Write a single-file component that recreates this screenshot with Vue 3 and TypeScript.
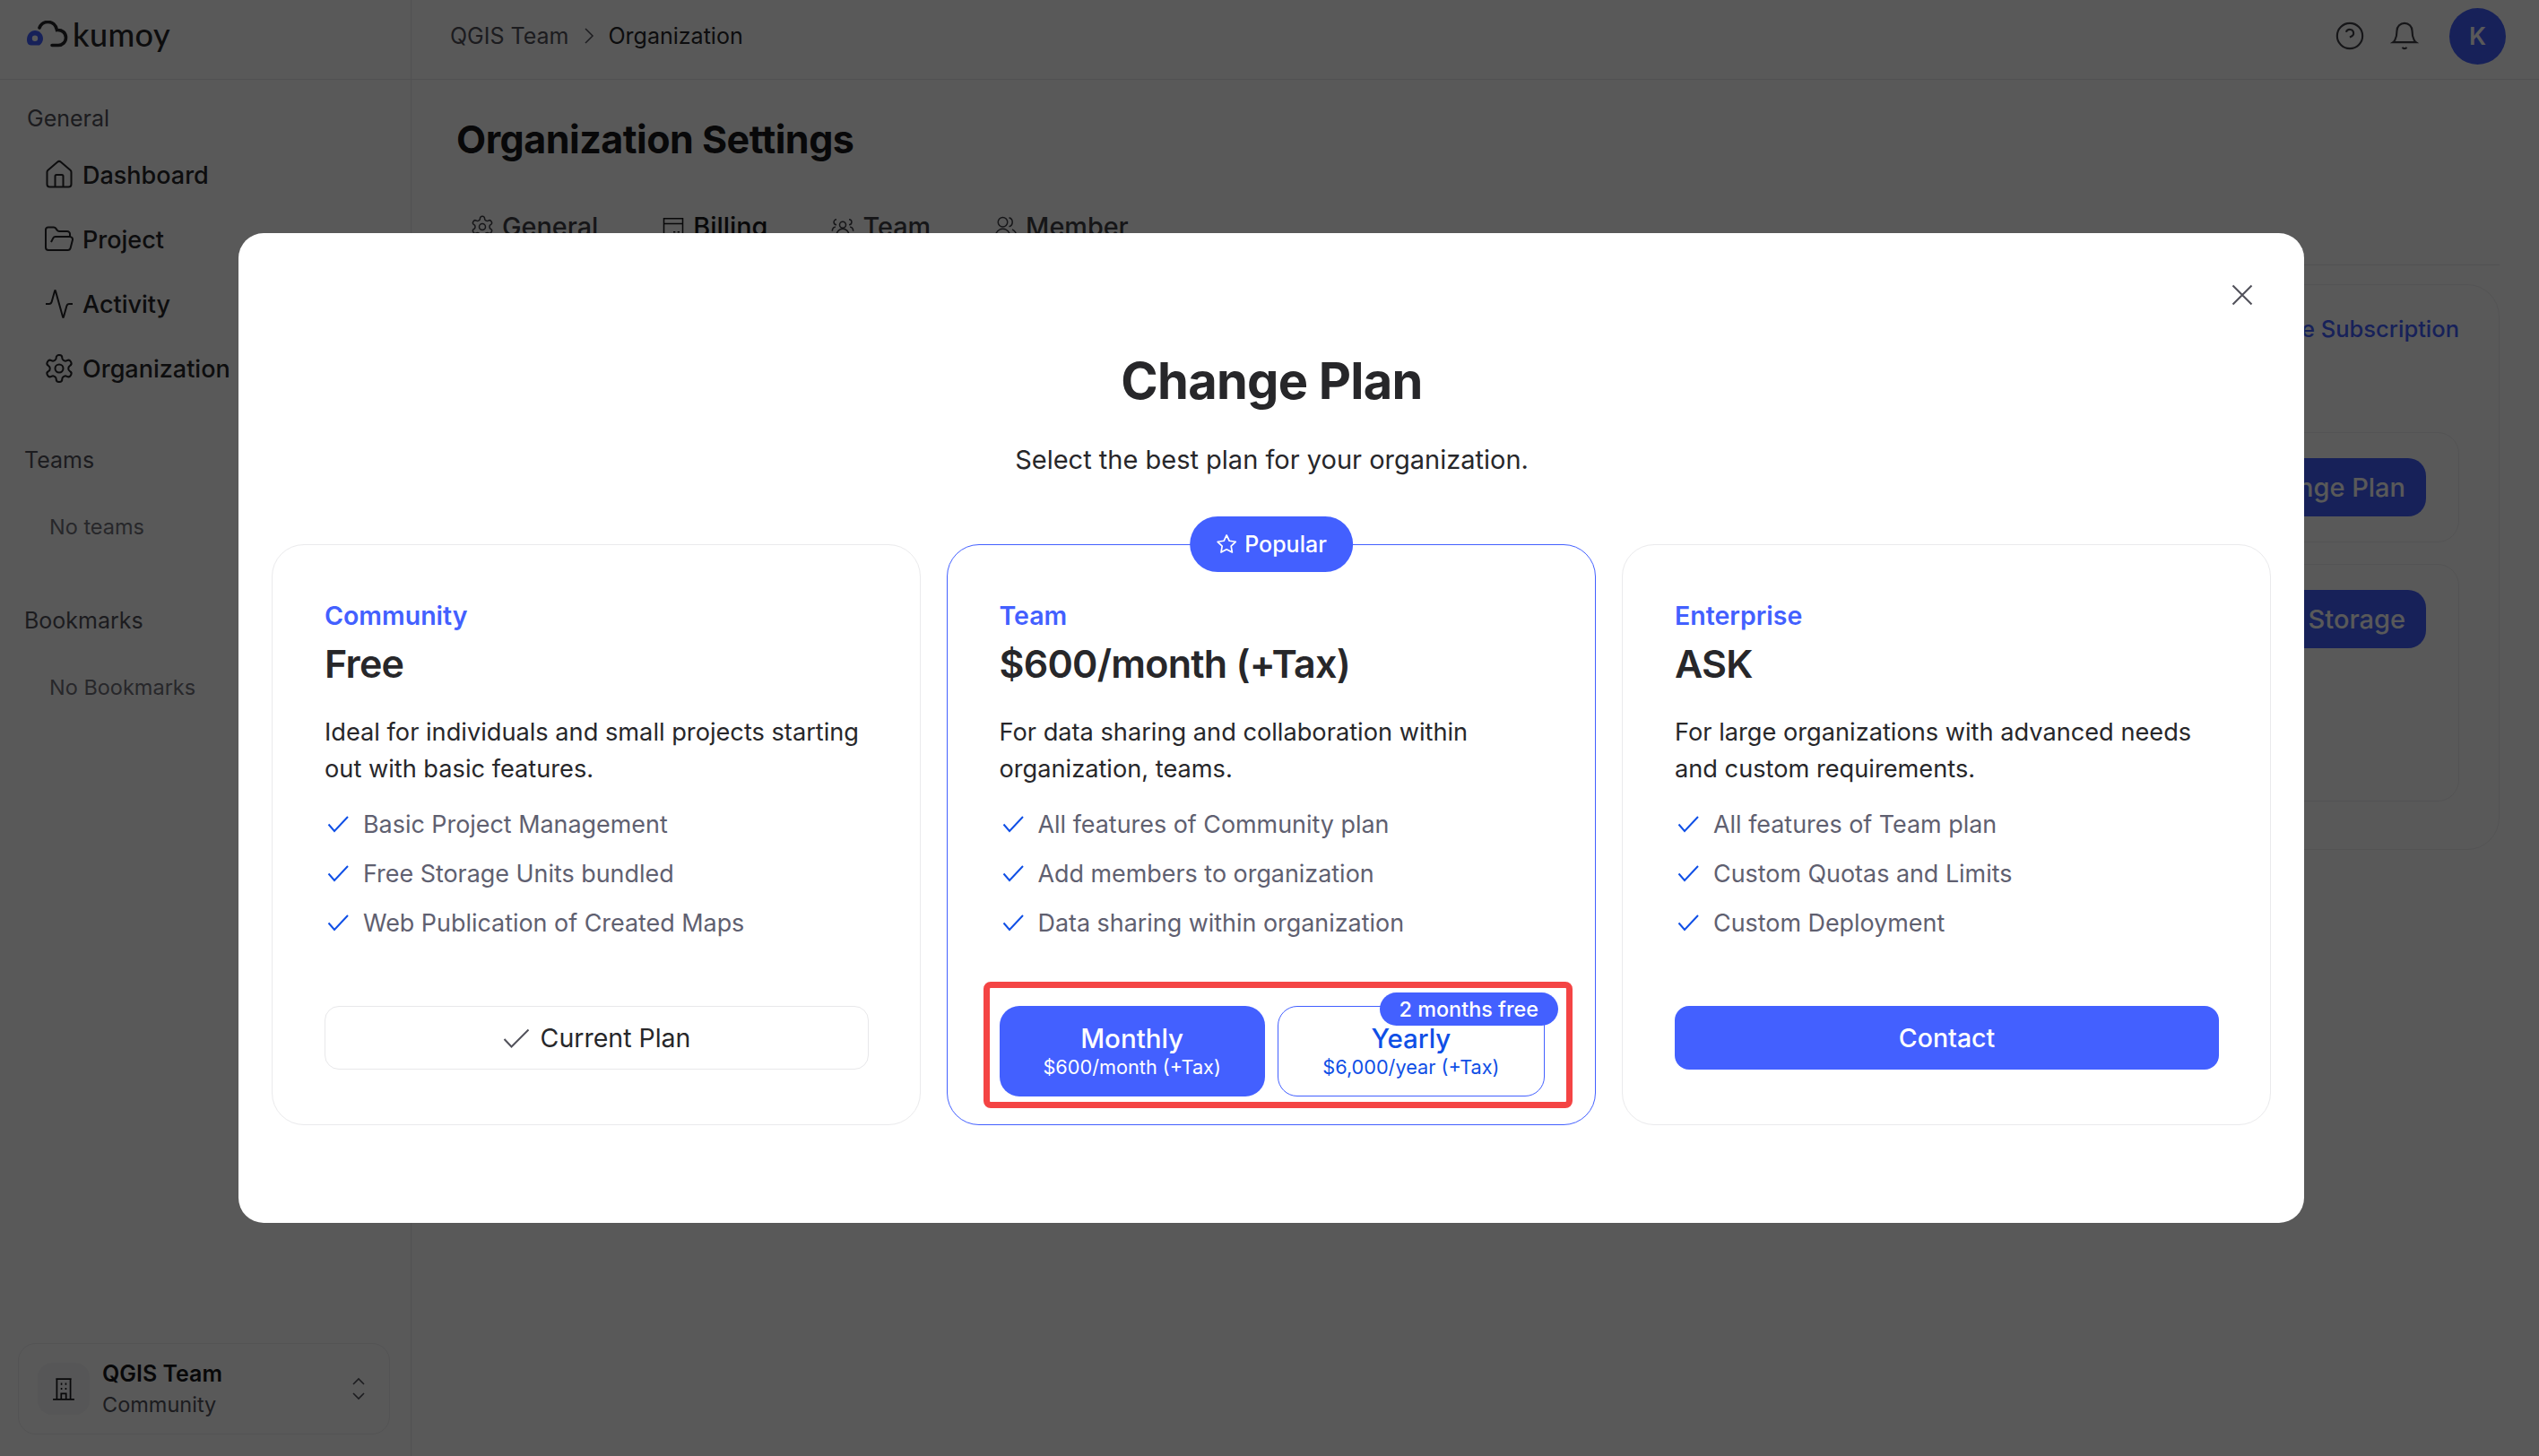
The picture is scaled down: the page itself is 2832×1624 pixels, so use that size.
<script setup lang="ts">
type Plan = {
  id: string
  label: string
  price: string
  desc: string
  features: string[]
}

const navItems = [
  { label: 'Dashboard', icon: 'home' },
  { label: 'Project', icon: 'folder' },
  { label: 'Activity', icon: 'activity' },
  { label: 'Organization', icon: 'gear' },
]

const tabs = [
  { label: 'General', icon: 'gear' },
  { label: 'Billing', icon: 'billing' },
  { label: 'Team', icon: 'team' },
  { label: 'Member', icon: 'member' },
]

const icons: Record<string, string[]> = {
  home: [
    'M15 21v-8a1 1 0 0 0-1-1h-4a1 1 0 0 0-1 1v8',
    'M3 10a2 2 0 0 1 .709-1.528l7-5.999a2 2 0 0 1 2.582 0l7 5.999A2 2 0 0 1 21 10v9a2 2 0 0 1-2 2H5a2 2 0 0 1-2-2z',
  ],
  folder: [
    'm6 14 1.5-2.9A2 2 0 0 1 9.24 10H20a2 2 0 0 1 1.94 2.5l-1.54 6a2 2 0 0 1-1.94 1.5H4a2 2 0 0 1-2-2V5a2 2 0 0 1 2-2h3.9a2 2 0 0 1 1.69.9l.81 1.2a2 2 0 0 0 1.67.9H18a2 2 0 0 1 2 2v2',
  ],
  activity: [
    'M22 12h-2.48a2 2 0 0 0-1.93 1.46l-2.35 8.36a.25.25 0 0 1-.48 0L9.24 2.18a.25.25 0 0 0-.48 0l-2.35 8.36A2 2 0 0 1 4.49 12H2',
  ],
  gear: [
    'M12.22 2h-.44a2 2 0 0 0-2 2v.18a2 2 0 0 1-1 1.73l-.43.25a2 2 0 0 1-2 0l-.15-.08a2 2 0 0 0-2.73.73l-.22.38a2 2 0 0 0 .73 2.73l.15.1a2 2 0 0 1 1 1.72v.51a2 2 0 0 1-1 1.74l-.15.09a2 2 0 0 0-.73 2.73l.22.38a2 2 0 0 0 2.73.73l.15-.08a2 2 0 0 1 2 0l.43.25a2 2 0 0 1 1 1.73V20a2 2 0 0 0 2 2h.44a2 2 0 0 0 2-2v-.18a2 2 0 0 1 1-1.73l.43-.25a2 2 0 0 1 2 0l.15.08a2 2 0 0 0 2.73-.73l.22-.39a2 2 0 0 0-.73-2.73l-.15-.08a2 2 0 0 1-1-1.74v-.5a2 2 0 0 1 1-1.74l.15-.09a2 2 0 0 0 .73-2.73l-.22-.38a2 2 0 0 0-2.73-.73l-.15.08a2 2 0 0 1-2 0l-.43-.25a2 2 0 0 1-1-1.73V4a2 2 0 0 0-2-2z',
    'M15 12a3 3 0 1 1-6 0 3 3 0 0 1 6 0z',
  ],
  billing: ['M3 4h18v17H3z', 'M3 9h18', 'M12 17h2M16 17h2'],
  team: ['M12 13a3 3 0 1 0 0-6 3 3 0 0 0 0 6z', 'M6 20a6 6 0 0 1 12 0', 'M6 5a2.5 2.5 0 0 0 0 5M2 16a4 4 0 0 1 3-4', 'M18 5a2.5 2.5 0 0 1 0 5M22 16a4 4 0 0 0-3-4'],
  member: ['M9 12a4.5 4.5 0 1 0 0-9 4.5 4.5 0 0 0 0 9z', 'M2 21a7 7 0 0 1 14 0', 'M15 3.2a4.5 4.5 0 0 1 0 8.6M18 14.5a7 7 0 0 1 4 6.5'],
}

const plans: Plan[] = [
  {
    id: 'community',
    label: 'Community',
    price: 'Free',
    desc: 'Ideal for individuals and small projects starting out with basic features.',
    features: ['Basic Project Management', 'Free Storage Units bundled', 'Web Publication of Created Maps'],
  },
  {
    id: 'team',
    label: 'Team',
    price: '$600/month (+Tax)',
    desc: 'For data sharing and collaboration within organization, teams.',
    features: ['All features of Community plan', 'Add members to organization', 'Data sharing within organization'],
  },
  {
    id: 'enterprise',
    label: 'Enterprise',
    price: 'ASK',
    desc: 'For large organizations with advanced needs and custom requirements.',
    features: ['All features of Team plan', 'Custom Quotas and Limits', 'Custom Deployment'],
  },
]
</script>

<template>
  <div class="page">
    <aside class="sidebar">
      <div class="logo">
        <svg class="logo-mark" width="46" height="30" viewBox="0 0 46 30" fill="none">
          <path d="M14 27.5 H4.5 C1.5 27.5 0 24.5 0 21.5 C0 15.5 4 11 9 11 C14 11 18 15 18 20 C18 23 16.5 25.5 14 27.5 Z M9 23 a3.2 3.2 0 1 0 0-6.4 a3.2 3.2 0 0 0 0 6.4 Z" fill="#4360ff" fill-rule="evenodd" />
          <path d="M14 8 C16 3 20 1.5 23.5 1.5 C28.5 1.5 32.5 5 33.5 10.5 C39 10 43.5 13.5 43.5 19 C43.5 24 39.5 27.5 35 27.5 H28" stroke="#27272a" stroke-width="3.6" stroke-linecap="round" />
        </svg>
        <span class="logo-text">kumoy</span>
      </div>

      <div class="side-title general">General</div>
      <nav class="nav">
        <a v-for="item in navItems" :key="item.label" class="nav-item">
          <svg width="36" height="36" viewBox="0 0 24 24" fill="none" stroke="currentColor" stroke-width="1.35">
            <path v-for="d in icons[item.icon]" :key="d" :d="d" />
          </svg>
          {{ item.label }}
        </a>
      </nav>

      <div class="side-title">Teams</div>
      <div class="side-empty">No teams</div>
      <div class="side-title">Bookmarks</div>
      <div class="side-empty">No Bookmarks</div>

      <div class="org-switch">
        <div class="org-icon">
          <svg width="26" height="26" viewBox="0 0 24 24" fill="none" stroke="#18181b" stroke-width="1.6">
            <path d="M1 23h22M4 2h16M5 2v21M19 2v21M9.5 23v-6h5v6" />
            <path d="M9 7h1.5M13.5 7H15M9 12h1.5M13.5 12H15" stroke-width="2" />
          </svg>
        </div>
        <div class="org-text">
          <div class="org-name">QGIS Team</div>
          <div class="org-plan">Community</div>
        </div>
        <svg width="16" height="28" viewBox="0 0 16 28" fill="none" stroke="#52525b" stroke-width="1.6">
          <path d="M2 9l6-6 6 6M2 19l6 6 6-6" />
        </svg>
      </div>
    </aside>

    <main class="main">
      <header class="topbar">
        <span class="crumb">QGIS Team</span>
        <svg width="14" height="24" viewBox="0 0 14 24" fill="none" stroke="#52525b" stroke-width="1.5">
          <path d="M3 4l8 8-8 8" />
        </svg>
        <span class="crumb current">Organization</span>
        <div class="top-actions">
          <svg width="34" height="34" viewBox="0 0 24 24" fill="none" stroke="#3f3f46" stroke-width="1.5">
            <circle cx="12" cy="12" r="10" />
            <path d="M9.09 9a3 3 0 0 1 5.83 1c0 2-3 3-3 3M12 17h.01" />
          </svg>
          <svg width="34" height="34" viewBox="0 0 24 24" fill="none" stroke="#3f3f46" stroke-width="1.5">
            <path d="M6 8a6 6 0 0 1 12 0c0 7 3 9 3 9H3s3-2 3-9" />
            <path d="M10.3 21a1.94 1.94 0 0 0 3.4 0" />
          </svg>
          <div class="avatar">K</div>
        </div>
      </header>

      <div class="content">
        <h1 class="page-title">Organization Settings</h1>
        <div class="tabs">
          <a v-for="tab in tabs" :key="tab.label" class="tab" :class="'tab-' + tab.label.toLowerCase()">
            <svg width="28" height="28" viewBox="0 0 24 24" fill="none" stroke="currentColor" stroke-width="1.3">
              <path v-for="d in icons[tab.icon]" :key="d" :d="d" />
            </svg>
            {{ tab.label }}
          </a>
        </div>
        <section class="billing">
          <a class="manage">Manage Subscription</a>
          <div class="billing-row short"><button class="dim-btn">Change Plan</button></div>
          <div class="billing-row tall"><button class="dim-btn">Add Storage</button></div>
        </section>
      </div>
    </main>

    <div class="overlay">
      <div class="modal">
        <button class="close" aria-label="Close">
          <svg width="42" height="42" viewBox="0 0 24 24" fill="none" stroke="#52525b" stroke-width="1.2">
            <path d="M18 6 6 18M6 6l12 12" />
          </svg>
        </button>
        <h2 class="modal-title">Change Plan</h2>
        <p class="modal-sub">Select the best plan for your organization.</p>

        <div class="plans">
          <article v-for="plan in plans" :key="plan.id" class="plan" :class="{ popular: plan.id === 'team' }">
            <div v-if="plan.id === 'team'" class="popular-pill">
              <svg width="24" height="24" viewBox="0 0 24 24" fill="none" stroke="#fff" stroke-width="1.7" stroke-linejoin="round">
                <polygon points="12 2 15.09 8.26 22 9.27 17 14.14 18.18 21.02 12 17.77 5.82 21.02 7 14.14 2 9.27 8.91 8.26 12 2" />
              </svg>
              Popular
            </div>
            <div class="plan-label">{{ plan.label }}</div>
            <div class="plan-price">{{ plan.price }}</div>
            <p class="plan-desc">{{ plan.desc }}</p>
            <ul class="features">
              <li v-for="f in plan.features" :key="f">
                <svg width="24" height="20" viewBox="0 0 24 20" fill="none" stroke="#0f4fe6" stroke-width="2">
                  <path d="M1.5 10.5 8 18 23 2" />
                </svg>
                {{ f }}
              </li>
            </ul>

            <div class="actions">
              <button v-if="plan.id === 'community'" class="btn outline">
                <svg width="30" height="22" viewBox="0 0 30 22" fill="none" stroke="#52525b" stroke-width="2">
                  <path d="M1.5 12 9.5 20.5 28.5 1.5" />
                </svg>
                Current Plan
              </button>
              <template v-else-if="plan.id === 'team'">
                <button class="cycle filled">
                  <span class="cycle-name">Monthly</span>
                  <span class="cycle-price">$600/month (+Tax)</span>
                </button>
                <button class="cycle ghost">
                  <span class="cycle-name">Yearly</span>
                  <span class="cycle-price">$6,000/year (+Tax)</span>
                  <span class="free-badge">2 months free</span>
                </button>
                <div class="annotation"></div>
              </template>
              <button v-else class="btn solid">Contact</button>
            </div>
          </article>
        </div>
      </div>
    </div>
  </div>
</template>

<style scoped>
* {
  box-sizing: border-box;
}

.page {
  position: relative;
  display: flex;
  width: 2832px;
  height: 1624px;
  overflow: hidden;
  background: #fff;
  color: #18181b;
  font-family: Inter, "Noto Sans", sans-serif;
}

.sidebar {
  flex: 0 0 459px;
  display: flex;
  flex-direction: column;
  border-right: 1px solid #e9e9ec;
}

.logo {
  height: 89px;
  padding: 0 0 12px 30px;
  display: flex;
  align-items: center;
  gap: 5px;
  border-bottom: 1px solid #e9e9ec;
}

.logo-text {
  font-family: Lato, sans-serif;
  font-size: 36px;
  font-weight: 500;
  letter-spacing: 0.4px;
  color: #27272a;
  line-height: 1;
}

.side-title {
  padding-left: 27px;
  font-size: 25px;
  line-height: 36px;
  color: #52525b;
}

.side-title.general {
  padding-left: 30px;
  margin-top: 25px;
}

.nav {
  display: flex;
  flex-direction: column;
  gap: 0;
  margin: 9px 0 48px;
}

.nav-item {
  height: 72px;
  padding-left: 48px;
  display: flex;
  align-items: center;
  gap: 8px;
  font-size: 27px;
  font-weight: 500;
  color: #27272a;
}

.side-empty {
  padding-left: 55px;
  margin: 39px 0 68px;
  font-size: 23.5px;
  line-height: 36px;
  color: #71717a;
}

.org-switch {
  margin: auto 23px 24px 20px;
  height: 102px;
  padding: 0 26px 0 21px;
  display: flex;
  align-items: center;
  border: 1px solid #eeeef0;
  border-radius: 20px;
}

.org-icon {
  width: 58px;
  height: 58px;
  display: flex;
  align-items: center;
  justify-content: center;
  background: #f7f7f8;
  border-radius: 16px;
  margin-right: 14px;
}

.org-text {
  flex: 1;
}

.org-name {
  font-size: 25px;
  font-weight: 600;
  line-height: 36px;
  color: #18181b;
}

.org-plan {
  font-size: 23.5px;
  line-height: 34px;
  color: #52525b;
}

.main {
  flex: 1;
  display: flex;
  flex-direction: column;
  min-width: 0;
}

.topbar {
  flex: 0 0 89px;
  padding: 0 37px 8px 43px;
  display: flex;
  align-items: center;
  gap: 15px;
  border-bottom: 1px solid #e9e9ec;
}

.crumb {
  font-size: 25px;
  color: #52525b;
}

.crumb.current {
  color: #27272a;
}

.top-actions {
  margin-left: auto;
  display: flex;
  align-items: center;
  gap: 27px;
}

.avatar {
  width: 63px;
  height: 63px;
  margin-left: 6px;
  border-radius: 50%;
  background: #4360ff;
  color: #fff;
  display: flex;
  align-items: center;
  justify-content: center;
  font-size: 27px;
  font-weight: 600;
}

.content {
  padding: 37px 44px 0 50px;
}

.page-title {
  margin: 0;
  font-size: 43px;
  line-height: 58px;
  font-weight: 700;
  letter-spacing: -0.5px;
  color: #18181b;
}

.tabs {
  height: 73px;
  margin-top: 39px;
  padding: 0 0 13px 15px;
  display: flex;
  align-items: center;
  border-bottom: 1px solid #e9e9ec;
}

.tab {
  display: flex;
  align-items: center;
  gap: 8px;
  margin-right: 70px;
  font-size: 28.8px;
  font-weight: 500;
  color: #3f3f46;
}

.tab-billing {
  color: #18181b;
}

.billing {
  height: 631px;
  margin-top: 21px;
  padding: 33px 44px 0;
  display: flex;
  flex-direction: column;
  border: 1px solid #eeeef0;
  border-radius: 36px;
}

.manage {
  align-self: flex-end;
  font-size: 25.5px;
  line-height: 32px;
  font-weight: 500;
  color: #4360ff;
}

.billing-row {
  display: flex;
  justify-content: flex-end;
  padding: 28px 36px 0 0;
  border: 1px solid #eeeef0;
  border-radius: 24px;
}

.billing-row.short {
  height: 123px;
  margin-top: 99px;
}

.billing-row.tall {
  height: 265px;
  margin-top: 24px;
}

.dim-btn {
  height: 65px;
  padding: 0 23px;
  border: 0;
  border-radius: 20px;
  background: #4360ff;
  color: #fff;
  font-family: inherit;
  font-size: 29px;
  font-weight: 500;
}

.overlay {
  position: absolute;
  inset: 0;
  padding-left: 4px;
  display: flex;
  align-items: center;
  justify-content: center;
  background: rgba(0, 0, 0, 0.65);
}

.modal {
  position: relative;
  width: 2304px;
  height: 1104px;
  padding: 133px 36px 0 37px;
  background: #fff;
  border-radius: 28px;
}

.close {
  position: absolute;
  top: 48px;
  right: 48px;
  padding: 0;
  border: 0;
  background: none;
  display: flex;
}

.modal-title {
  margin: 0;
  text-align: center;
  font-size: 56px;
  line-height: 65px;
  font-weight: 700;
  letter-spacing: -0.75px;
  color: #27272a;
}

.modal-sub {
  margin: 35px 0 0;
  text-align: center;
  font-size: 29px;
  line-height: 40px;
  color: #27272a;
}

.plans {
  margin-top: 74px;
  display: grid;
  grid-template-columns: repeat(3, 724px);
  gap: 29px;
}

.plan {
  position: relative;
  height: 648px;
  padding: 59px 57px 0 58px;
  border: 1px solid #eaeaec;
  border-radius: 36px;
}

.plan.popular {
  padding: 59px 56px 0 57.5px;
  border: 1.5px solid #4360ff;
}

.popular-pill {
  position: absolute;
  top: -32px;
  left: 50%;
  transform: translateX(-50%);
  height: 62px;
  padding: 0 29px;
  display: flex;
  align-items: center;
  gap: 8px;
  border-radius: 31px;
  background: #4360ff;
  color: #fff;
  font-size: 25px;
  font-weight: 500;
  white-space: nowrap;
}

.plan-label {
  font-size: 28.5px;
  line-height: 40px;
  font-weight: 600;
  color: #4360ff;
}

.plan-price {
  margin-top: 4px;
  font-size: 43px;
  line-height: 58px;
  font-weight: 600;
  letter-spacing: -0.75px;
  color: #27272a;
}

.plan-desc {
  margin: 28px 0 0;
  font-size: 27.2px;
  line-height: 40.5px;
  color: #27272a;
}

.features {
  margin: 22px 0 0;
  padding: 0;
  list-style: none;
  display: flex;
  flex-direction: column;
  gap: 18px;
}

.features li {
  height: 37px;
  display: flex;
  align-items: center;
  gap: 16px;
  font-size: 26.9px;
  color: #5f6070;
}

.features svg {
  margin-left: 3px;
  flex: none;
}

.actions {
  position: relative;
  height: 101px;
  margin-top: 75px;
  display: flex;
  align-items: flex-start;
  gap: 14px;
}

.btn {
  width: 100%;
  height: 71px;
  display: flex;
  align-items: center;
  justify-content: center;
  gap: 12px;
  border-radius: 16px;
  font-family: inherit;
  font-size: 28.5px;
}

.btn.outline {
  background: #fff;
  border: 1px solid #e8e8ea;
  color: #27272a;
}

.btn.solid {
  background: #4360ff;
  border: 0;
  color: #fff;
  font-weight: 500;
}

.cycle {
  position: relative;
  flex: 1;
  height: 101px;
  padding: 0 0 2px;
  display: flex;
  flex-direction: column;
  align-items: center;
  justify-content: center;
  border-radius: 22px;
  font-family: inherit;
}

.cycle.filled {
  background: #4360ff;
  border: 0;
  color: #fff;
}

.cycle.ghost {
  background: #fff;
  border: 1.5px solid #4360ff;
  color: #0f4fe6;
}

.cycle-name {
  font-size: 29.5px;
  line-height: 36px;
  font-weight: 500;
}

.cycle-price {
  font-size: 21.7px;
  line-height: 28px;
}

.free-badge {
  position: absolute;
  top: -16px;
  right: -16px;
  height: 37px;
  padding: 0 22px;
  display: flex;
  align-items: center;
  border-radius: 19px;
  background: #4360ff;
  color: #fff;
  font-size: 23.4px;
  font-weight: 500;
  white-space: nowrap;
}

.annotation {
  position: absolute;
  top: -27px;
  left: -18px;
  right: -31px;
  bottom: -13px;
  border: 7px solid #f44444;
  border-radius: 8px;
  pointer-events: none;
}
</style>
